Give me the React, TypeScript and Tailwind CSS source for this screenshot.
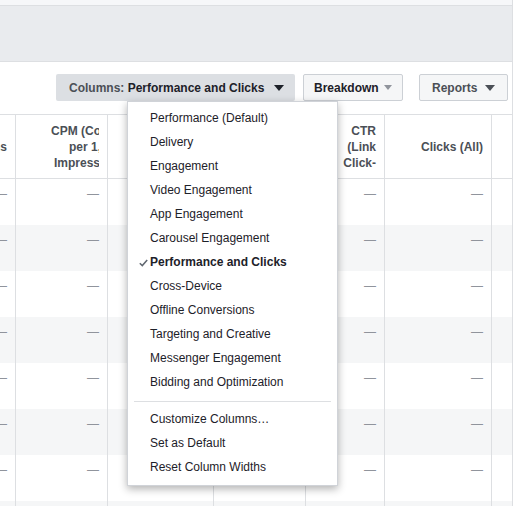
import React from 'react';

const menuItems = [
  'Performance (Default)',
  'Delivery',
  'Engagement',
  'Video Engagement',
  'App Engagement',
  'Carousel Engagement',
  'Performance and Clicks',
  'Cross-Device',
  'Offline Conversions',
  'Targeting and Creative',
  'Messenger Engagement',
  'Bidding and Optimization',
];

const extraItems = ['Customize Columns…', 'Set as Default', 'Reset Column Widths'];

function Caret({ color }: { color: string }) {
  return (
    <svg width="10" height="6" viewBox="0 0 10 6" className="shrink-0">
      <polygon points="0,0 10,0 5,6" fill={color} />
    </svg>
  );
}

function Dash() {
  return <span className="text-[#90949c]">—</span>;
}

export default function App() {
  const rows = [0, 1, 2, 3, 4, 5, 6, 7];

  return (
    <div className="relative w-[514px] h-[506px] overflow-hidden bg-white font-['Liberation_Sans',Arial,sans-serif] text-[12px]">
      <div className="w-[513px] h-full border-r border-[#dddfe2] overflow-hidden">
        {/* top strips */}
        <div className="h-[6px] bg-[#f6f7f9] border-b border-[#dddfe2]" />
        <div className="h-[56px] bg-[#e9ebee] border-b border-[#dddfe2]" />

        {/* toolbar */}
        <div className="h-[52px] pt-[12px] flex items-start justify-end pr-[4px]">
          <button className="h-[27px] w-[239px] rounded-[2px] bg-[#dcdfe3] pl-[13px] pr-[11px] flex items-center justify-between font-bold">
            <span>
              <span className="text-[#4b4f56]">Columns: </span>
              <span className="text-[#1d2129]">Performance and Clicks</span>
            </span>
            <Caret color="#1d2129" />
          </button>
          <button className="ml-[8px] h-[27px] w-[100px] rounded-[2px] bg-[#f5f6f7] border border-[#ccd0d5] pl-[10px] pr-[10px] flex items-center justify-between font-bold text-[#1d2129]">
            <span>Breakdown</span>
            <svg width="8" height="5" viewBox="0 0 8 5"><polygon points="0,0 8,0 4,5" fill="#90949c" /></svg>
          </button>
          <button className="ml-[16px] h-[27px] w-[89px] rounded-[2px] bg-[#f5f6f7] border border-[#ccd0d5] pl-[12px] pr-[12px] flex items-center justify-between font-bold text-[#4b4f56]">
            <span>Reports</span>
            <Caret color="#4b4f56" />
          </button>
        </div>

        {/* table */}
        <div className="-ml-[85px] w-[700px]">
          <div className="flex h-[65px] border-y border-[#dddfe2] font-bold text-[#4b4f56] leading-[16px]">
            <div className="w-[101px] border-r border-[#dddfe2] flex items-center justify-end pr-[8px] overflow-hidden whitespace-nowrap">
              Impressions
            </div>
            <div className="w-[92px] border-r border-[#dddfe2] flex items-center pl-[8px] pr-[8px]">
              <div className="w-full overflow-hidden whitespace-nowrap">
                <div className="ml-[27px]">CPM (Cost</div>
                <div className="ml-[45px]">per 1,000</div>
                <div className="ml-[30px]">Impressions)</div>
              </div>
            </div>
            <div className="w-[106px] border-r border-[#dddfe2] flex items-center justify-end pr-[8px]">Reach</div>
            <div className="w-[92px] border-r border-[#dddfe2] flex items-center justify-end pr-[8px]">Frequency</div>
            <div className="w-[79px] border-r border-[#dddfe2] flex items-center justify-end pr-[8px] text-right">
              <div>
                <div>CTR</div>
                <div>(Link</div>
                <div>Click-</div>
              </div>
            </div>
            <div className="w-[107px] border-r border-[#dddfe2] flex items-center justify-end pr-[8px]">Clicks (All)</div>
            <div className="flex-1" />
          </div>

          {rows.map((r) => (
            <div key={r} className={`flex h-[46px] leading-[16px] ${r % 2 === 1 ? 'bg-[#f5f6f7]' : 'bg-white'}`}>
              <div className="w-[101px] border-r border-[#dddfe2] flex justify-end pr-[8px] pt-[7px]"><Dash /></div>
              <div className="w-[92px] border-r border-[#dddfe2] flex justify-end pr-[8px] pt-[7px]"><Dash /></div>
              <div className="w-[106px] border-r border-[#dddfe2] flex justify-end pr-[8px] pt-[7px]"><Dash /></div>
              <div className="w-[92px] border-r border-[#dddfe2] flex justify-end pr-[8px] pt-[7px]"><Dash /></div>
              <div className="w-[79px] border-r border-[#dddfe2] flex justify-end pr-[8px] pt-[7px]"><Dash /></div>
              <div className="w-[107px] border-r border-[#dddfe2] flex justify-end pr-[8px] pt-[7px]"><Dash /></div>
              <div className="flex-1" />
            </div>
          ))}
        </div>
      </div>

      {/* columns dropdown menu */}
      <div className="absolute left-[127px] top-[101px] w-[211px] bg-white border border-[#d0d3d8] shadow-[0_3px_8px_rgba(0,0,0,0.3)] pt-[4px] pb-[6px] text-[#1d2129]">
        {menuItems.map((item) => {
          const active = item === 'Performance and Clicks';
          return (
            <div key={item} className="relative h-[24px] flex items-center pl-[22px] whitespace-nowrap">
              {active && (
                <svg width="9" height="8" viewBox="0 0 9 8" className="absolute left-[11px] top-[9px]">
                  <path d="M0.8 4.2 L3.3 6.6 L8.2 0.9" fill="none" stroke="#606770" strokeWidth="1.5" />
                </svg>
              )}
              <span className={active ? 'font-bold' : ''}>{item}</span>
            </div>
          );
        })}
        <div className="mx-[6px] mt-[7px] mb-[5px] border-t border-[#dddfe2]" />
        {extraItems.map((item) => (
          <div key={item} className="h-[24px] flex items-center pl-[22px] whitespace-nowrap">
            {item}
          </div>
        ))}
      </div>
    </div>
  );
}
